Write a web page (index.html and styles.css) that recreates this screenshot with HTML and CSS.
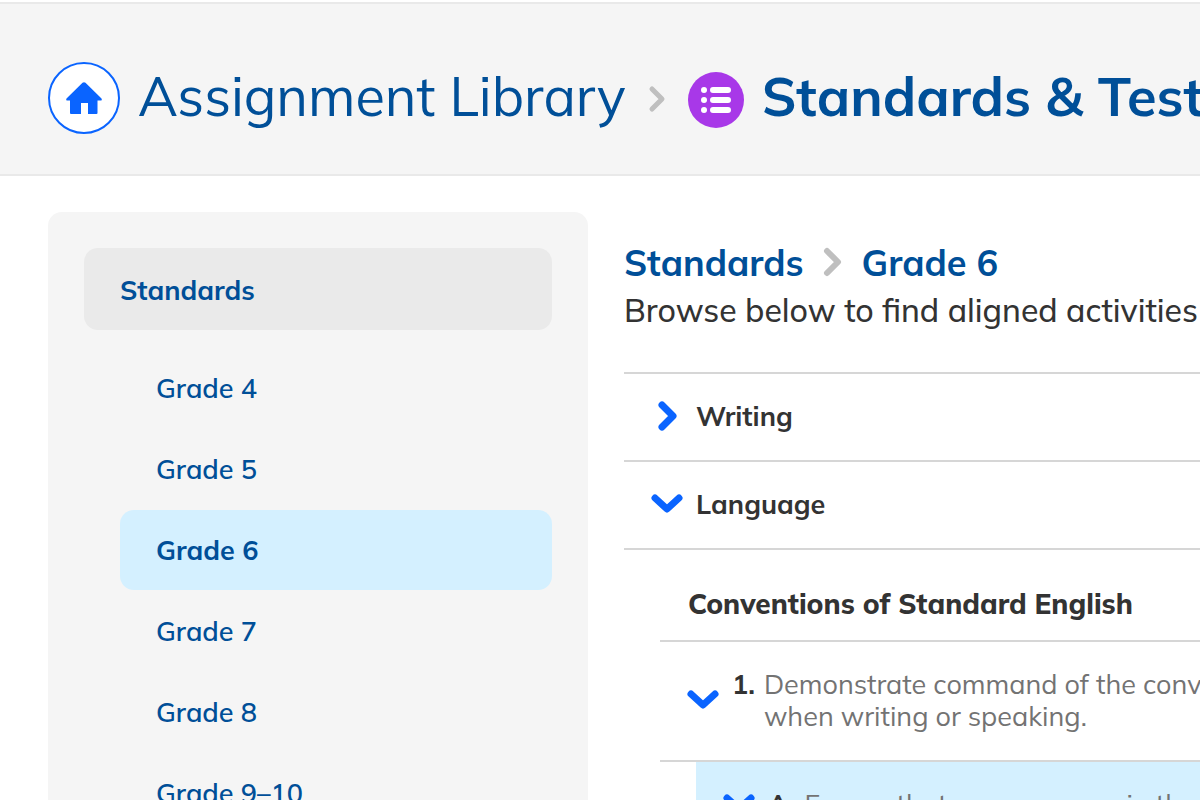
FILE: index.html
```html
<!DOCTYPE html>
<html lang="en">
<head>
    <meta charset="UTF-8">
    <meta name="viewport" content="width=device-width, initial-scale=1.0">
    <title>Assignment Library</title>
    <link rel="stylesheet" href="styles.css">
</head>
<body>
    <header class="page-header">
        <nav class="title-crumbs" aria-label="Breadcrumb">
            <a class="home-link" href="#" aria-label="Home">
                <svg width="36" height="32" viewBox="0 0 36 32">
                    <path d="M16.500 .8Q18 -.3 19.500 .8L35.500 16.500Q36.500 18.500 34.500 18.500H31.500V31Q31.500 32 30.500 32H22V21H15V32H5Q4 32 4 31V18.500H1.500Q-.5 18.500 .5 16.500Z" fill="#0a64ff"/>
                </svg>
            </a>
            <a class="crumb" href="#">Assignment Library</a>
            <svg class="crumb-arrow" width="16" height="26" viewBox="0 0 16 26">
                <path d="M3 2L13 12L3 22" fill="none" stroke="#bfbfbf" stroke-width="5" stroke-linecap="round" stroke-linejoin="round"/>
            </svg>
            <svg class="list-icon" width="56" height="56" viewBox="0 0 56 56">
                <circle cx="28" cy="28" r="28" fill="#a838e8"/>
                <g stroke="#fff" stroke-width="6" stroke-linecap="round">
                    <path d="M16 18H16.010M16 28H16.010M16 38H16.010"/>
                    <path d="M25 18H40M25 28H40M25 38H40"/>
                </g>
            </svg>
            <h1>Standards &amp; Test</h1>
        </nav>
    </header>

    <div class="layout">
        <nav class="sidebar" aria-label="Standards">
            <a class="sidebar-title" href="#">Standards</a>
            <ul class="grades">
                <li><a href="#">Grade 4</a></li>
                <li><a href="#">Grade 5</a></li>
                <li><a class="active" href="#" aria-current="page">Grade 6</a></li>
                <li><a href="#">Grade 7</a></li>
                <li><a href="#">Grade 8</a></li>
                <li><a href="#">Grade 9–10</a></li>
            </ul>
        </nav>

        <main class="content">
            <h2>
                <a href="#">Standards</a>
                <svg width="18" height="30" viewBox="0 0 18 30">
                    <path d="M3 3L14 14L3 25" fill="none" stroke="#bfbfbf" stroke-width="6" stroke-linecap="round" stroke-linejoin="round"/>
                </svg>
                <a href="#">Grade 6</a>
            </h2>
            <p class="intro">Browse below to find aligned activities</p>

            <div class="accordion">
                <button class="row" type="button" aria-expanded="false">
                    <svg width="30" height="30" viewBox="0 0 30 30"><path class="chevron" d="M10 4L21 15L10 26"/></svg>
                    Writing
                </button>
                <button class="row" type="button" aria-expanded="true">
                    <svg width="30" height="30" viewBox="0 0 30 30"><path class="chevron" d="M3 9L15 20L27 9"/></svg>
                    Language
                </button>
                <section class="strand">
                    <h3>Conventions of Standard English</h3>
                    <button class="standard" type="button" aria-expanded="true">
                        <svg width="30" height="30" viewBox="0 0 30 30"><path class="chevron" d="M3 9L15 20L27 9"/></svg>
                        <b>1.</b>
                        <span>Demonstrate command of the conv<br>when writing or speaking.</span>
                    </button>
                    <button class="standard sub" type="button" aria-expanded="true">
                        <svg width="30" height="30" viewBox="0 0 30 30"><path class="chevron" d="M3 9L15 20L27 9"/></svg>
                        <b>A.</b>
                        <span>Ensure that pronouns are in the</span>
                    </button>
                </section>
            </div>
        </main>
    </div>
</body>
</html>
```
FILE: styles.css
```css
* {
    box-sizing: border-box;
}

body {
    margin: 0;
    padding-top: 2px;
    height: 100vh;
    overflow: hidden;
    font-family: Mulish, Muli, Lato, sans-serif;
    font-size: 27px;
    background-color: #fff;
    color: #333;
}

a {
    color: #004f98;
    text-decoration: none;
}

h1, h2, h3, p, ul {
    margin: 0;
    padding: 0;
}

svg {
    flex: none;
    overflow: visible;
}

.page-header {
    padding: 58px 48px 40px;
    border-top: 2px solid #e9e9e9;
    border-bottom: 2px solid #e9e9e9;
    background-color: #f5f5f5;
}

.title-crumbs {
    display: flex;
    align-items: center;
    font-size: 54px;
    line-height: 68px;
    white-space: nowrap;
}

.title-crumbs .crumb,
.title-crumbs h1 {
    padding-bottom: 4px;
}

.home-link {
    display: flex;
    flex: none;
    align-items: center;
    justify-content: center;
    width: 72px;
    height: 72px;
    margin-right: 18px;
    border: 2px solid #0a64ff;
    border-radius: 50%;
    background-color: #fff;
}

.crumb-arrow,
.list-icon {
    margin-top: 4px;
}

.crumb-arrow {
    margin-left: 23px;
    margin-right: 23px;
}

.list-icon {
    margin-right: 18px;
}

h1 {
    font-size: 54px;
    color: #004f98;
}

.layout {
    display: flex;
    align-items: flex-start;
    gap: 36px;
    padding: 36px 0 36px 48px;
}

.sidebar {
    flex: none;
    width: 540px;
    padding: 36px;
    border-radius: 14px;
    background-color: #f5f5f5;
}

.sidebar a {
    display: block;
    padding: 0 36px;
    border-radius: 14px;
    line-height: 80px;
    font-weight: 600;
}

.sidebar .sidebar-title {
    margin-bottom: 18px;
    padding: 2px 36px 0;
    font-weight: bold;
    background-color: #eaeaea;
}

.grades {
    display: grid;
    gap: 1px;
    padding-left: 36px;
    list-style: none;
}

.sidebar .active {
    font-weight: bold;
    background-color: #d4f0ff;
}

.content {
    flex: 1;
    min-width: 0;
    padding-top: 28px;
    white-space: nowrap;
}

h2 {
    display: flex;
    align-items: center;
    gap: 20px;
    font-size: 36px;
    line-height: 46px;
}

.intro {
    margin-bottom: 38px;
    font-size: 32px;
    font-weight: 500;
    line-height: 48px;
}

.accordion {
    border-top: 2px solid #d6d6d6;
}

button {
    display: flex;
    width: 100%;
    border: none;
    border-bottom: 2px solid #d6d6d6;
    background: none;
    font: inherit;
    color: inherit;
    text-align: left;
    white-space: nowrap;
    cursor: pointer;
}

.row {
    align-items: center;
    gap: 14px;
    padding: 0 28px 2px;
    line-height: 84px;
    font-weight: bold;
}

.chevron {
    fill: none;
    stroke: #0a64ff;
    stroke-width: 7;
    stroke-linecap: round;
    stroke-linejoin: round;
}

.strand {
    padding-left: 36px;
}

h3 {
    padding: 36px 28px 18px;
    border-bottom: 2px solid #d6d6d6;
    font-size: 28px;
    font-weight: 800;
    line-height: 36px;
}

.standard {
    padding: 26px 28px 28px;
    line-height: 32px;
}

.standard svg {
    align-self: center;
    margin-right: 14px;
}

.standard b {
    margin-right: 9px;
}

.standard span {
    color: #737373;
}

.sub {
    margin-left: 36px;
    background-color: #d4f0ff;
}
```
